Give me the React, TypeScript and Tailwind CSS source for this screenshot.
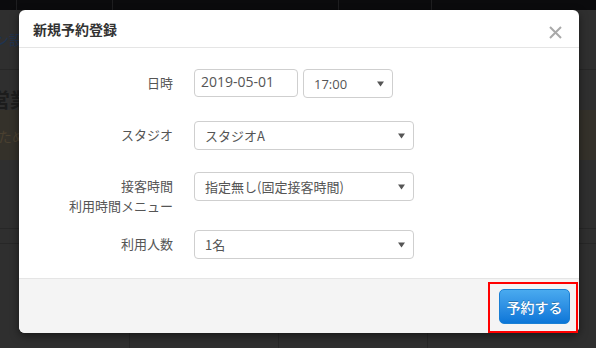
import React from "react";

function Caret() {
  return (
    <svg width="7" height="6" viewBox="0 0 7 6" className="absolute right-[8px] top-1/2 -translate-y-1/2">
      <path d="M0 0.5h7L3.5 5.5z" fill="#555" />
    </svg>
  );
}

function Select({ value, className }: { value: string; className: string }) {
  return (
    <div
      className={`relative h-[29px] rounded-[4px] border border-[#cfcfcf] bg-white pl-[10px] text-[13px] leading-[27px] text-[#555] ${className}`}
    >
      {value}
      <Caret />
    </div>
  );
}

function Row({
  label,
  children,
  className,
}: {
  label: React.ReactNode;
  children: React.ReactNode;
  className: string;
}) {
  return (
    <div className={`flex ${className}`}>
      <div className="w-[154px] pt-[4px] text-right text-[13px] leading-[20px] text-[#555]">{label}</div>
      <div className="ml-[21px] flex gap-[5px]">{children}</div>
    </div>
  );
}

export default function App() {
  return (
    <div className="relative h-[348px] w-[596px] overflow-hidden bg-[#2f2f2f] font-['Noto_Sans_CJK_JP','Noto_Sans',sans-serif]">
      {/* dimmed page behind the dialog */}
      <div className="flex h-[10px] bg-[#0b0b0d]">
        <div className="w-[17px] border-r border-[#1e1e20]" />
        <div className="w-[96px] border-r border-[#1e1e20]" />
        <div className="w-[226px] border-r border-[#1e1e20]" />
        <div className="w-[93px] border-r border-[#1e1e20]" />
      </div>
      <div className="h-[60px] border-b border-[#272727] pt-[19px] text-[14px] leading-[20px] text-[#1f3350]">
        <span className="-ml-[5px]">ン設</span>
      </div>
      <div className="h-[40px] pt-[18px] text-[20px] leading-[24px] font-bold text-[#1c1c1c]">
        <span className="-ml-[10px]">営業</span>
      </div>
      <div className="h-[50px] bg-[#34312a] pt-[16px] text-[14px] leading-[20px] text-[#4a4030]">
        <span className="-ml-[2px]">ため</span>
      </div>
      <div className="h-[68px]" />
      <div className="h-[16px] border-y border-[#272727]" />
      <div className="flex h-[104px]">
        <div className="w-[130px] border-r border-[#272727]" />
        <div className="w-[149px] border-r border-[#272727]" />
        <div className="w-[149px] border-r border-[#272727]" />
      </div>

      {/* dialog */}
      <div className="absolute left-[19px] top-[10px] flex h-[323px] w-[560px] flex-col rounded-[6px] bg-white shadow-[0_3px_9px_rgba(0,0,0,0.5)]">
        <div className="flex h-[38px] items-center justify-between border-b border-[#e5e5e5] pl-[14px] pr-[17px]">
          <span className="text-[14px] font-bold leading-[20px] text-[#333]">新規予約登録</span>
          <svg width="13" height="13" viewBox="0 0 13 13" className="mt-[7px]">
            <path d="M1 1L12 12M12 1L1 12" stroke="#a9a9a9" strokeWidth="2" />
          </svg>
        </div>

        <div className="flex-1 pt-[21px]">
          <Row label="日時" className="mb-[23px]">
            <div className="h-[28px] w-[104px] rounded-[4px] border border-[#cfcfcf] pl-[6px] font-['Open_Sans',sans-serif] text-[14px] leading-[24px] text-[#555]">
              2019-05-01
            </div>
            <Select value="17:00" className="h-[28px] w-[90px] font-['Open_Sans',sans-serif] leading-[28px]" />
          </Row>
          <Row label="スタジオ" className="mb-[22px]">
            <Select value="スタジオA" className="w-[220px]" />
          </Row>
          <Row
            label={
              <>
                接客時間
                <br />
                利用時間メニュー
              </>
            }
            className="mb-[14px]"
          >
            <Select value="指定無し(固定接客時間)" className="w-[220px]" />
          </Row>
          <Row label="利用人数" className="">
            <Select value="1名" className="w-[220px]" />
          </Row>
        </div>

        <div className="flex h-[55px] justify-end rounded-b-[6px] border-t border-[#e5e5e5] bg-[#f4f4f4] pr-[9px] pt-[10px]">
          <button className="h-[35px] w-[71px] rounded-[5px] border border-[#1a7fd4] bg-gradient-to-b from-[#49aaef] to-[#0a76d8] text-[14px] font-medium leading-[20px] text-white [text-shadow:0_-1px_0_rgba(0,0,0,0.25)]">
            予約する
          </button>
        </div>
      </div>

      {/* annotation */}
      <div className="absolute left-[488px] top-[282px] h-[51px] w-[90px] border-2 border-[#ff0000]" />
    </div>
  );
}
